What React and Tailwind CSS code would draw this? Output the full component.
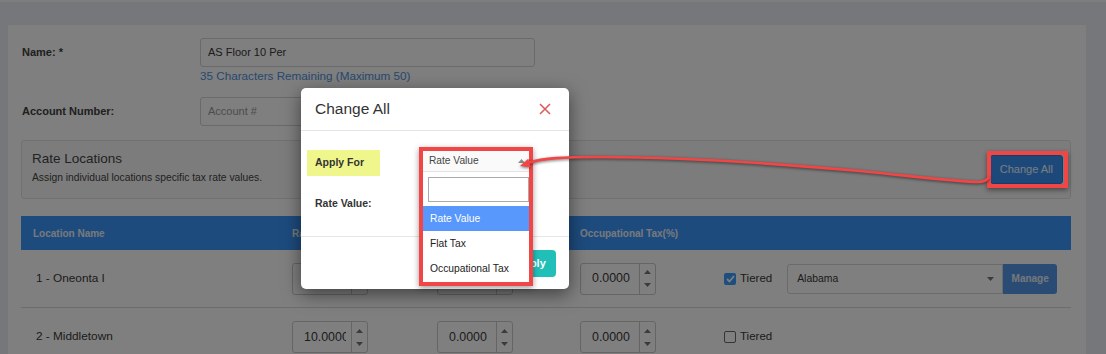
import React from "react";

function UpTri({ c = "#777" }) {
  return (
    <svg width="7" height="4" viewBox="0 0 7 4">
      <path d="M0 4 L3.5 0 L7 4 Z" fill={c} />
    </svg>
  );
}
function DownTri({ c = "#777" }) {
  return (
    <svg width="7" height="4" viewBox="0 0 7 4">
      <path d="M0 0 L3.5 4 L7 0 Z" fill={c} />
    </svg>
  );
}

function NumBox({ v }) {
  return (
    <div className="flex h-[32px] w-[76px] rounded-[3px] border border-[#cacaca] bg-white">
      <div className="flex flex-1 items-center pl-[11px]">
        <div className="w-[42px] overflow-hidden whitespace-nowrap text-[12.4px] text-[#383838]">{v}</div>
      </div>
      <div className="flex w-[16px] flex-col items-center justify-center gap-[9px] border-l border-[#cacaca]">
        <UpTri c="#777" />
        <DownTri c="#777" />
      </div>
    </div>
  );
}

function Tiered({ checked }) {
  return (
    <div className="flex items-center gap-[4px]">
      {checked ? (
        <div className="flex h-[12px] w-[12px] items-center justify-center rounded-[2px] bg-[#3a9cff]">
          <svg width="9" height="8" viewBox="0 0 9 8">
            <path d="M1 4 L3.5 6.5 L8 1" fill="none" stroke="#ffffff" strokeWidth="1.8" />
          </svg>
        </div>
      ) : (
        <div className="h-[12px] w-[12px] rounded-[2px] border border-[#6a6a6a] bg-white" />
      )}
      <span className="text-[11.5px] text-[#383838]">Tiered</span>
    </div>
  );
}

function Row({ name, a, b, c, checked, withSelect, border }) {
  return (
    <div
      className={
        "grid h-[58px] grid-cols-[259px_145px_143px_144px_1fr] items-center px-[12px] " +
        (border ? "border-b border-[#dadada]" : "")
      }
    >
      <div className="pl-[3px] text-[11.8px] text-[#383838]">{name}</div>
      <div>
        <NumBox v={a} />
      </div>
      <div>
        <NumBox v={b} />
      </div>
      <div>
        <NumBox v={c} />
      </div>
      <div className="flex items-center">
        <Tiered checked={checked} />
        {withSelect && (
          <div className="ml-[15px] flex h-[30px] flex-1">
            <div className="flex w-[216px] items-center justify-between rounded-l-[3px] border border-[#d6d6d6] bg-white pl-[9px] pr-[8px] text-[10.4px] text-[#383838]">
              <span>Alabama</span>
              <DownTri c="#777" />
            </div>
            <div className="flex w-[54px] items-center justify-center rounded-r-[3px] bg-[#5498e8] text-[10px] font-bold text-[#e8f0fa]">
              Manage
            </div>
          </div>
        )}
      </div>
    </div>
  );
}

export default function App() {
  return (
    <div className="relative h-[354px] w-[1106px] overflow-hidden bg-[#eceef6] font-['Liberation_Sans',Arial,sans-serif]">
      <div className="h-[2px] bg-[#fcfcfe]" />
      {/* card */}
      <div className="ml-[8px] mt-[23px] h-[400px] w-[1078px] bg-white pl-[13px] pr-[15px] pt-[13px]">
        {/* name */}
        <div className="flex">
          <div className="flex h-[29px] w-[179px] items-center pl-[1px] text-[11px] font-bold text-[#404040]">
            Name: *
          </div>
          <div>
            <div className="flex h-[29px] w-[335px] items-center rounded-[3px] border border-[#d4d4d4] px-[7px] text-[11px] text-[#383838]">
              AS Floor 10 Per
            </div>
            <div className="mt-[2px] text-[11.7px] leading-[14px] text-[#4e92dc]">
              35 Characters Remaining (Maximum 50)
            </div>
          </div>
        </div>
        {/* account */}
        <div className="mt-[14px] flex">
          <div className="flex h-[29px] w-[179px] items-center pl-[1px] text-[11px] font-bold text-[#404040]">
            Account Number:
          </div>
          <div className="flex h-[29px] w-[335px] items-center rounded-[3px] border border-[#d4d4d4] px-[7px] text-[11px] text-[#999]">
            Account #
          </div>
        </div>
        {/* rate locations panel */}
        <div className="mt-[14px] flex h-[59px] items-center justify-between rounded-[3px] border border-[#e2e2e2] bg-[#f9f9f9] pl-[10px]">
          <div className="-mt-[4px]">
            <div className="text-[13.5px] leading-[16px] text-[#444]">Rate Locations</div>
            <div className="mt-[4px] text-[10.3px] leading-[14px] text-[#444]">
              Assign individual locations specific tax rate values.
            </div>
          </div>
          <div className="relative mr-[7px]">
            <div className="flex h-[29px] items-center rounded-[3px] border border-[#2e7ad0] bg-[#3b93f4] px-[9px] text-[11px] text-[#f4f8ff]">
              Change All
            </div>
          </div>
        </div>
        {/* table */}
        <div className="mt-[17px]">
          <div className="grid h-[34px] grid-cols-[259px_145px_143px_144px_1fr] items-center bg-[#3a97fc] px-[12px] text-[10px] font-bold text-[#eef3fa]">
            <div>Location Name</div>
            <div>Rate Value(%)</div>
            <div>Flat Tax</div>
            <div>Occupational Tax(%)</div>
            <div />
          </div>
          <Row name="1 - Oneonta I" a="0.0000" b="0.0000" c="0.0000" checked withSelect border />
          <Row name="2 - Middletown" a="10.0000" b="0.0000" c="0.0000" />
        </div>
      </div>

      {/* backdrop */}
      <div className="absolute inset-0 bg-[rgba(0,0,0,0.5)]" />

      {/* annotation box around Change All */}
      <div className="absolute left-[987px] top-[151px] h-[37px] w-[81px] border-[4px] border-[#f24545] shadow-[0_2px_5px_rgba(0,0,0,0.45)]" />

      {/* modal */}
      <div className="absolute left-[301px] top-[88px] flex h-[201px] w-[268px] flex-col rounded-[5px] bg-white shadow-[0_5px_18px_rgba(0,0,0,0.5)]">
        <div className="flex h-[43px] items-center justify-between border-b border-[#e5e5e5] pl-[14px] pr-[18px]">
          <span className="text-[15.5px] text-[#333]">Change All</span>
          <svg width="12" height="12" viewBox="0 0 12 12">
            <path d="M1 1 L11 11 M11 1 L1 11" stroke="#e05656" strokeWidth="1.5" />
          </svg>
        </div>
        <div className="h-[105px] px-[14px] pt-[18px]">
          <div className="-ml-[8px] inline-flex h-[26px] items-center bg-[#eef68c] pl-[8px] pr-[16px] text-[10.5px] font-bold text-[#333]">
            Apply For
          </div>
          <div className="mt-[20px] text-[10.5px] font-bold leading-[14px] text-[#333]">Rate Value:</div>
        </div>
        <div className="flex flex-1 items-center justify-end border-t border-[#e5e5e5] pr-[13px]">
          <div className="flex h-[27px] w-[51px] items-center justify-center rounded-[4px] bg-[#20c0b8] text-[11px] font-bold text-white">
            Apply
          </div>
        </div>

        {/* dropdown */}
        <div className="absolute left-[118px] top-[59px] h-[139px] w-[114px] border-[4px] border-[#f24545] bg-white shadow-[0_2px_6px_rgba(0,0,0,0.4)]">
          <div className="flex h-[21px] items-center justify-between border-b border-[#e3e3e3] bg-[#fafafa] pl-[6px] pr-[4px] text-[10.2px] text-[#444]">
            <span>Rate Value</span>
            <UpTri c="#8a8a8a" />
          </div>
          <div className="pb-[4px] pl-[5px] pt-[5px]">
            <div className="h-[25px] border border-[#aaa]" />
          </div>
          <div className="flex h-[25px] items-center bg-[#5897fb] pl-[7px] text-[10.3px] text-white">Rate Value</div>
          <div className="flex h-[25px] items-center pl-[7px] text-[10.3px] text-[#222]">Flat Tax</div>
          <div className="flex h-[25px] items-center pl-[7px] text-[10.3px] text-[#222]">Occupational Tax</div>
        </div>
      </div>

      {/* annotation arrow */}
      <svg
        className="pointer-events-none absolute left-0 top-0 drop-shadow-[0_1px_1.5px_rgba(0,0,0,0.55)]"
        width="1106"
        height="354"
        viewBox="0 0 1106 354"
      >
        <path
          d="M527 163 C545 158, 562 157, 600 157 C680 157, 760 162, 860 171 C920 177, 960 182, 978 182 Q986 182 989 177"
          fill="none"
          stroke="#f24545"
          strokeWidth="2.6"
        />
        <path d="M520 166 L530.7 167.2 L528.3 158.8 Z" fill="#f24545" />
      </svg>
    </div>
  );
}
